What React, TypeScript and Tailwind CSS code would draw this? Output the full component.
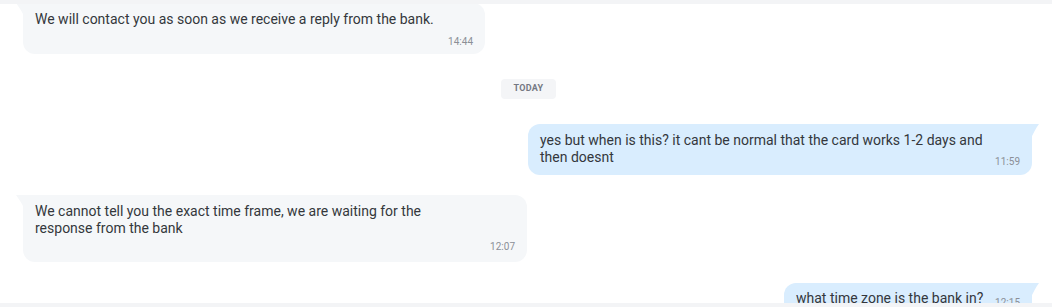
import React from "react";

type Msg = {
  side: "in" | "out";
  lines: string[];
  time: string;
  width: string;
  inlineTime?: boolean;
  pad: string;
  timeGap?: string;
};

const messages: Msg[] = [
  {
    side: "in",
    lines: ["We will contact you as soon as we receive a reply from the bank."],
    time: "14:44",
    width: "w-[462px]",
    pad: "pt-[8px] pb-[6px]",
    timeGap: "mt-[7px]",
  },
];

const TailIn = () => (
  <svg className="absolute -left-[7px] top-0" width="8" height="13" viewBox="0 0 8 13">
    <path d="M0 0 H8 V13 C6 9 3 4 0 0 Z" fill="#f5f7f9" />
  </svg>
);

const TailOut = ({ color }: { color: string }) => (
  <svg className="absolute -right-[7px] top-0" width="8" height="14" viewBox="0 0 8 14">
    <path d="M8 0 H0 V14 C2 10 5 4 8 0 Z" fill={color} />
  </svg>
);

const Time = ({ children, className = "" }: { children: React.ReactNode; className?: string }) => (
  <span className={`text-[10px] leading-[13px] text-[#8b8f97] ${className}`}>{children}</span>
);

const IncomingBubble = ({ m }: { m: Msg }) => (
  <div className={`relative ${m.width} rounded-xl rounded-tl-none bg-[#f5f7f9] px-3 ${m.pad}`}>
    <TailIn />
    <div className="text-[14px] leading-[17px] text-[#34373c]">
      {m.lines.map((l, i) => (
        <div key={i}>{l}</div>
      ))}
    </div>
    <div className={`flex justify-end ${m.timeGap}`}>
      <Time>{m.time}</Time>
    </div>
  </div>
);

const App = () => {
  return (
    <div className="flex h-[307px] w-[1052px] flex-col overflow-hidden bg-white font-['Roboto',sans-serif]">
      {/* top strip */}
      <div className="h-[4px] shrink-0 bg-[#f3f4f6]" />

      <div className="flex-1 overflow-hidden">
        <div className="-mt-[1px] flex flex-col pl-[23px] pr-[20px]">
          <IncomingBubble m={messages[0]} />

          {/* date divider */}
          <div className="mt-[25px] flex justify-center pl-[2px]">
            <span className="flex h-[20px] w-[55px] items-center justify-center rounded bg-[#f4f5f7] text-[9px] font-bold tracking-[0.3px] text-[#747883]">
              TODAY
            </span>
          </div>

          {/* outgoing */}
          <div className="mt-[25px] flex justify-end">
            <div className="relative w-[504px] rounded-xl rounded-tr-none bg-[#d9edfe] px-3 pb-[9px] pt-[8px]">
              <TailOut color="#d9edfe" />
              <div className="text-[14px] leading-[17px] text-[#34373c]">
                <div>yes but when is this? it cant be normal that the card works 1-2 days and</div>
                <div className="flex items-end justify-between">
                  <span>then doesnt</span>
                  <Time className="mb-[-2px]">11:59</Time>
                </div>
              </div>
            </div>
          </div>

          {/* incoming 2 */}
          <div className="mt-[20px]">
            <IncomingBubble
              m={{
                side: "in",
                lines: [
                  "We cannot tell you the exact time frame, we are waiting for the",
                  "response from the bank",
                ],
                time: "12:07",
                width: "w-[504px]",
                pad: "pt-[8px] pb-[9px]",
                timeGap: "mt-[3px]",
              }}
            />
          </div>

          {/* outgoing 2 */}
          <div className="mt-[21px] flex justify-end">
            <div className="relative w-[248px] rounded-xl rounded-tr-none bg-[#d9edfe] px-3 pb-[9px] pt-[7px]">
              <TailOut color="#d9edfe" />
              <div className="flex items-end justify-between text-[14px] leading-[17px] text-[#34373c]">
                <span>what time zone is the bank in?</span>
                <Time className="mb-[-2px]">12:15</Time>
              </div>
            </div>
          </div>
        </div>
      </div>

      {/* bottom strip */}
      <div className="h-[4px] shrink-0 bg-[#f3f4f6]" />
    </div>
  );
};

export default App;
